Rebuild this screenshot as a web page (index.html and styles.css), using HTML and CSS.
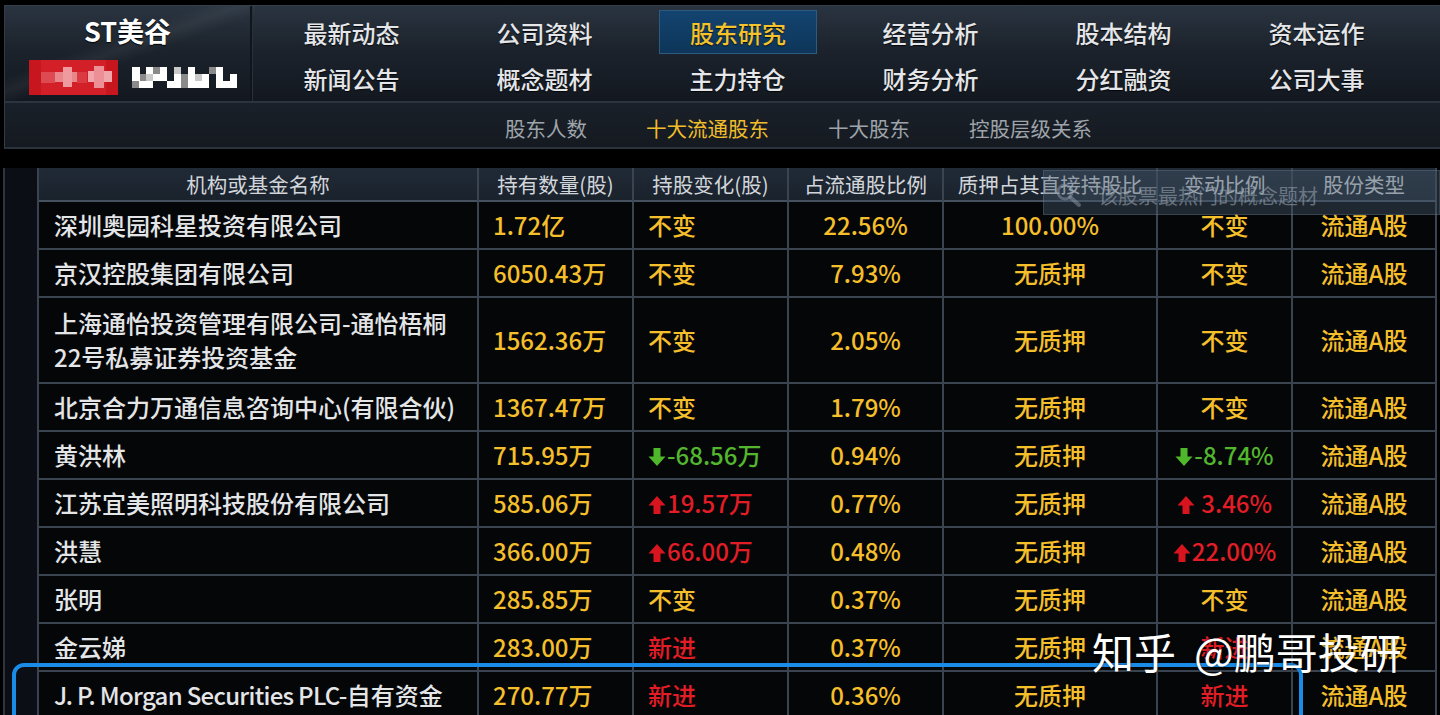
FILE: index.html
```html
<!DOCTYPE html>
<html lang="zh-CN">
<head>
<meta charset="utf-8">
<title>十大流通股东</title>
<link rel="stylesheet" href="styles.css">
</head>
<body>
<header class="panel">
  <div class="nav-main">
    <div class="brand">
      <div class="brand-name">ST美谷</div>
      <svg class="mosaic" width="210" height="36" viewBox="29 60 210 36" aria-hidden="true">
        <rect x="29" y="60" width="89" height="35" rx="3" fill="#d21f28"/>
        <rect x="29" y="60" width="12" height="35" fill="#c8161f"/>
        <rect x="106" y="60" width="12" height="35" fill="#c8161f"/>
        <rect x="41" y="72" width="14" height="11" fill="#de4a52"/>
        <rect x="55" y="72" width="22" height="10" fill="#e8868c"/>
        <rect x="63" y="67" width="9" height="20" fill="#ee9a9e"/>
        <rect x="77" y="72" width="10" height="11" fill="#da3a42"/>
        <rect x="88" y="71" width="24" height="11" fill="#f0a6aa"/>
        <rect x="94" y="66" width="10" height="22" fill="#ec9096"/>
        <g fill="#ffffff">
          <rect x="132" y="67" width="8" height="14"/>
          <rect x="146" y="67" width="7" height="7"/>
          <rect x="139" y="81" width="14" height="7"/>
          <rect x="153" y="74" width="14" height="7"/>
          <rect x="160" y="67" width="7" height="7"/>
          <rect x="167" y="81" width="14" height="7"/>
          <rect x="174" y="74" width="7" height="7"/>
          <rect x="188" y="67" width="7" height="21"/>
          <rect x="195" y="81" width="14" height="7"/>
          <rect x="202" y="74" width="7" height="7"/>
          <rect x="216" y="67" width="7" height="21"/>
          <rect x="223" y="81" width="14" height="7"/>
          <rect x="230" y="74" width="7" height="7"/>
        </g>
        <g fill="#8a8a8a">
          <rect x="140" y="74" width="6" height="7"/>
          <rect x="153" y="67" width="7" height="7"/>
          <rect x="181" y="74" width="7" height="14"/>
          <rect x="209" y="67" width="7" height="7"/>
          <rect x="132" y="81" width="7" height="7"/>
        </g>
        <g fill="#c9c9c9">
          <rect x="146" y="74" width="7" height="7"/>
          <rect x="174" y="67" width="7" height="7"/>
          <rect x="195" y="74" width="7" height="7"/>
        </g>
      </svg>
    </div>
    <nav class="nav-grid">
      <a class="nav-item">最新动态</a>
      <a class="nav-item">公司资料</a>
      <a class="nav-item active">股东研究</a>
      <a class="nav-item">经营分析</a>
      <a class="nav-item">股本结构</a>
      <a class="nav-item">资本运作</a>
      <a class="nav-item">新闻公告</a>
      <a class="nav-item">概念题材</a>
      <a class="nav-item">主力持仓</a>
      <a class="nav-item">财务分析</a>
      <a class="nav-item">分红融资</a>
      <a class="nav-item">公司大事</a>
    </nav>
  </div>
  <nav class="sub-nav">
    <a class="sub-item">股东人数</a>
    <a class="sub-item active">十大流通股东</a>
    <a class="sub-item">十大股东</a>
    <a class="sub-item">控股层级关系</a>
  </nav>
</header>

<main class="table-area">
  <div class="side-strip"></div>
  <table class="holders">
    <colgroup>
      <col class="w1"><col class="w2"><col class="w3"><col class="w4"><col class="w5"><col class="w6"><col class="w7">
    </colgroup>
    <thead>
      <tr>
        <th>机构或基金名称</th>
        <th>持有数量(股)</th>
        <th>持股变化(股)</th>
        <th>占流通股比例</th>
        <th>质押占其直接持股比</th>
        <th>变动比例</th>
        <th>股份类型</th>
      </tr>
    </thead>
    <tbody>
      <tr>
        <td class="name">深圳奥园科星投资有限公司</td>
        <td class="num">1.72亿</td>
        <td class="chg y">不变</td>
        <td class="ctr y">22.56%</td>
        <td class="ctr y">100.00%</td>
        <td class="ctr y">不变</td>
        <td class="ctr y">流通A股</td>
      </tr>
      <tr>
        <td class="name">京汉控股集团有限公司</td>
        <td class="num">6050.43万</td>
        <td class="chg y">不变</td>
        <td class="ctr y">7.93%</td>
        <td class="ctr y">无质押</td>
        <td class="ctr y">不变</td>
        <td class="ctr y">流通A股</td>
      </tr>
      <tr class="tall">
        <td class="name two">上海通怡投资管理有限公司-通怡梧桐<br>22号私募证券投资基金</td>
        <td class="num">1562.36万</td>
        <td class="chg y">不变</td>
        <td class="ctr y">2.05%</td>
        <td class="ctr y">无质押</td>
        <td class="ctr y">不变</td>
        <td class="ctr y">流通A股</td>
      </tr>
      <tr>
        <td class="name">北京合力万通信息咨询中心(有限合伙)</td>
        <td class="num">1367.47万</td>
        <td class="chg y">不变</td>
        <td class="ctr y">1.79%</td>
        <td class="ctr y">无质押</td>
        <td class="ctr y">不变</td>
        <td class="ctr y">流通A股</td>
      </tr>
      <tr>
        <td class="name">黄洪林</td>
        <td class="num">715.95万</td>
        <td class="chg g"><svg class="arrow" viewBox="0 0 18 18" aria-hidden="true"><path d="M5.5 0h7v8.5h5L9 18 0.5 8.5h5z" fill="#4fb82a"/></svg>-68.56万</td>
        <td class="ctr y">0.94%</td>
        <td class="ctr y">无质押</td>
        <td class="ctr g"><svg class="arrow" viewBox="0 0 18 18" aria-hidden="true"><path d="M5.5 0h7v8.5h5L9 18 0.5 8.5h5z" fill="#4fb82a"/></svg>-8.74%</td>
        <td class="ctr y">流通A股</td>
      </tr>
      <tr>
        <td class="name">江苏宜美照明科技股份有限公司</td>
        <td class="num">585.06万</td>
        <td class="chg r"><svg class="arrow" viewBox="0 0 18 18" aria-hidden="true"><path d="M5.5 18h7V9.5h5L9 0 0.5 9.5h5z" fill="#d8141e"/></svg>19.57万</td>
        <td class="ctr y">0.77%</td>
        <td class="ctr y">无质押</td>
        <td class="ctr r"><svg class="arrow" viewBox="0 0 18 18" aria-hidden="true"><path d="M5.5 18h7V9.5h5L9 0 0.5 9.5h5z" fill="#d8141e"/></svg> 3.46%</td>
        <td class="ctr y">流通A股</td>
      </tr>
      <tr>
        <td class="name">洪慧</td>
        <td class="num">366.00万</td>
        <td class="chg r"><svg class="arrow" viewBox="0 0 18 18" aria-hidden="true"><path d="M5.5 18h7V9.5h5L9 0 0.5 9.5h5z" fill="#d8141e"/></svg>66.00万</td>
        <td class="ctr y">0.48%</td>
        <td class="ctr y">无质押</td>
        <td class="ctr r"><svg class="arrow" viewBox="0 0 18 18" aria-hidden="true"><path d="M5.5 18h7V9.5h5L9 0 0.5 9.5h5z" fill="#d8141e"/></svg>22.00%</td>
        <td class="ctr y">流通A股</td>
      </tr>
      <tr>
        <td class="name">张明</td>
        <td class="num">285.85万</td>
        <td class="chg y">不变</td>
        <td class="ctr y">0.37%</td>
        <td class="ctr y">无质押</td>
        <td class="ctr y">不变</td>
        <td class="ctr y">流通A股</td>
      </tr>
      <tr>
        <td class="name">金云娣</td>
        <td class="num">283.00万</td>
        <td class="chg r">新进</td>
        <td class="ctr y">0.37%</td>
        <td class="ctr y">无质押</td>
        <td class="ctr r">新进</td>
        <td class="ctr y">流通A股</td>
      </tr>
      <tr>
        <td class="name"><span class="latin">J. P. Morgan Securities PLC-</span>自有资金</td>
        <td class="num">270.77万</td>
        <td class="chg r">新进</td>
        <td class="ctr y">0.36%</td>
        <td class="ctr y">无质押</td>
        <td class="ctr r">新进</td>
        <td class="ctr y">流通A股</td>
      </tr>
    </tbody>
  </table>
</main>

<div class="tooltip">
  <svg class="search" width="30" height="26" viewBox="0 0 30 26" aria-hidden="true">
    <circle cx="11" cy="10" r="7" fill="none" stroke="rgba(150,165,180,0.45)" stroke-width="3"/>
    <path d="M16 15l9 8" stroke="rgba(150,165,180,0.45)" stroke-width="4" stroke-linecap="round"/>
  </svg>
  <span class="tip-text">该股票最热门的概念题材</span>
</div>

<div class="highlight"></div>

<div class="watermark"><span>知乎</span><span class="wm-at">@鹏哥投研</span></div>
</body>
</html>
```

FILE: styles.css
```css
* { box-sizing: border-box; }

html, body {
  margin: 0;
  padding: 0;
}

body {
  width: 1440px;
  height: 715px;
  overflow: hidden;
  position: relative;
  background: #000;
  font-family: "Noto Sans CJK SC", "Noto Sans", sans-serif;
  color: #e2e4e6;
}

a { text-decoration: none; cursor: default; }

/* ---------- header panel ---------- */
.panel {
  margin: 5px 0 0 4px;
  height: 144px;
  border-left: 1px solid #323b46;
  border-top: 1px solid #34404c;
  border-bottom: 2px solid #2a323c;
  background: #161b22;
}

.nav-main {
  display: flex;
  height: 95px;
  background:
    linear-gradient(160deg, rgba(255,255,255,0) 38%, rgba(255,255,255,0.05) 46%, rgba(255,255,255,0) 54%) 0 0 / 250px 95px no-repeat,
    linear-gradient(180deg, #2a3440 0%, #1c232c 45%, #131820 100%);
}

.brand {
  width: 247px;
  flex: none;
  display: flex;
  flex-direction: column;
  align-items: center;
  padding-top: 6px;
  border-right: 2px solid #10151b;
  box-shadow: 1px 0 0 #28303a;
}

.brand-name {
  font-size: 27px;
  line-height: 38px;
  font-weight: 700;
  color: #ffffff;
  text-shadow: 0 1px 1px #000;
}

.mosaic {
  display: block;
  margin-top: 10px;
  margin-left: 12px;
}

.nav-grid {
  display: grid;
  grid-template-columns: repeat(6, 193px);
  grid-auto-rows: 44px;
  row-gap: 2px;
  padding: 4px 0 0 3px;
}

.nav-item {
  display: flex;
  align-items: center;
  justify-content: center;
  font-size: 24px;
  font-weight: 500;
  color: #e4e6e9;
  text-shadow: 0 1px 1px rgba(0,0,0,0.8);
}

.nav-item.active {
  margin: 0 17px 0 18px;
  color: #f3c22c;
  background: linear-gradient(180deg, #134470 0%, #0e3559 100%);
  border: 1px solid #2c5b82;
}

.sub-nav {
  display: flex;
  align-items: center;
  gap: 59px;
  height: 46px;
  padding: 5px 0 0 500px;
  border-top: 2px solid #2b343f;
  background: linear-gradient(180deg, #1a2029 0%, #151a21 100%);
}

.sub-item {
  font-size: 20.5px;
  color: #9ea4aa;
}

.sub-item.active {
  color: #f1be2b;
}

/* ---------- table ---------- */
.table-area {
  display: flex;
  margin-top: 19px;
}

.side-strip {
  width: 34px;
  flex: none;
  margin-left: 3px;
  border-left: 2px solid #2e353e;
  background: #0b0f15;
}

.holders {
  border-collapse: separate;
  border-spacing: 0;
  table-layout: fixed;
  width: 1398px;
  background: #050608;
  border-left: 2px solid #3a4350;
}

.w1 { width: 440px; }
.w2 { width: 155px; }
.w3 { width: 155px; }
.w4 { width: 155px; }
.w5 { width: 214px; }
.w6 { width: 135px; }
.w7 { width: 144px; }

.holders th,
.holders td {
  padding: 0;
  border-right: 2px solid #3a4350;
  border-bottom: 2px solid #3a4350;
  white-space: nowrap;
  overflow: visible;
}

.holders th {
  height: 34px;
  font-size: 20.5px;
  font-weight: 400;
  color: #d2d6db;
  text-align: center;
  background: linear-gradient(180deg, #202a36 0%, #1a222c 100%);
  border-bottom-color: #46515f;
}

.holders td {
  height: 48px;
  font-size: 24px;
  font-weight: 500;
  line-height: 34px;
}

.holders tr.tall td { height: 86px; }

.name {
  padding-left: 15px !important;
  color: #e3e5e7;
  text-align: left;
}

.latin { letter-spacing: -0.7px; }

.name.two { line-height: 34px; }

.num {
  padding-left: 14px !important;
  color: #f4bf2a;
}

.chg {
  padding-left: 14px !important;
}

.ctr { text-align: center; }

.y { color: #f4bf2a; }
.r { color: #e21d26; }
.g { color: #52b62e; }

.arrow {
  width: 18px;
  height: 18px;
  vertical-align: -1px;
  margin-right: 1px;
}

/* ---------- overlays ---------- */
.tooltip {
  position: absolute;
  left: 1043px;
  top: 170px;
  width: 397px;
  height: 45px;
  display: flex;
  align-items: center;
  background: rgba(70, 88, 108, 0.42);
  border: 1px solid rgba(130, 150, 170, 0.25);
}

.search {
  margin-left: 10px;
  margin-top: 4px;
}

.tip-text {
  margin-left: 14px;
  margin-top: 6px;
  font-size: 20px;
  color: rgba(150, 160, 172, 0.6);
}

.highlight {
  position: absolute;
  left: 12px;
  top: 663px;
  width: 1291px;
  height: 80px;
  border: 4px solid #1a8ce8;
  border-radius: 12px;
}

.watermark {
  position: absolute;
  left: 1092px;
  top: 630px;
  font-size: 42px;
  line-height: 1;
  color: #ffffff;
  text-shadow: 0 0 3px rgba(0,0,0,0.6);
  white-space: nowrap;
}

.wm-at { margin-left: 18px; }
```
